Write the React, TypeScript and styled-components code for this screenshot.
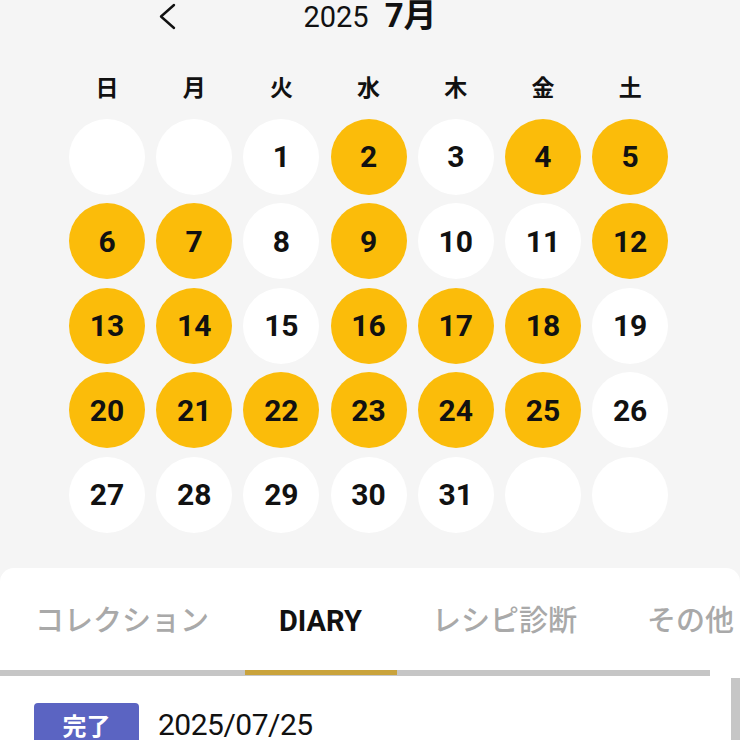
import React from 'react';
import styled, {createGlobalStyle} from "styled-components";

const GlobalStyle = createGlobalStyle`
    html, body {
        margin: 0;
        padding: 0;
        background: #f5f5f5;
    }
    body {
        font-family: Roboto, "Noto Sans CJK JP", sans-serif;
        color: #111;
    }
`

const WEEKDAYS = ['日', '月', '火', '水', '木', '金', '土']
const MARKED = [2, 4, 5, 6, 7, 9, 12, 13, 14, 16, 17, 18, 20, 21, 22, 23, 24, 25]
const TABS = ['コレクション', 'DIARY', 'レシピ診断', 'その他']

const buildCells = (): (number | null)[] => {
    const cells: (number | null)[] = [null, null]
    for (let d = 1; d <= 31; d++) cells.push(d)
    while (cells.length % 7 !== 0) cells.push(null)
    return cells
}

export default function App() {
    const cells = buildCells()
    return (
        <Page>
            <GlobalStyle/>
            <Calendar>
                <Header>
                    <PrevButton aria-label="前の月">
                        <svg width="20" height="28" viewBox="0 0 20 28" fill="none">
                            <polyline points="16,2 3,13.5 16,25" stroke="#111" strokeWidth="2.4"
                                      strokeLinecap="round" strokeLinejoin="round"/>
                        </svg>
                    </PrevButton>
                    <Title>
                        <Year>2025</Year>
                        <Month>7月</Month>
                    </Title>
                    <span/>
                </Header>
                <Grid>
                    {WEEKDAYS.map(w => <Weekday key={w}>{w}</Weekday>)}
                    {cells.map((d, i) => (
                        <Day key={i} $marked={d !== null && MARKED.includes(d)}>{d ?? ''}</Day>
                    ))}
                </Grid>
            </Calendar>
            <Card>
                <TabStrip>
                    {TABS.map(t => <Tab key={t} $active={t === 'DIARY'}>{t}</Tab>)}
                </TabStrip>
                <Track>
                    <Indicator/>
                </Track>
                <Body>
                    <Entry>
                        <Badge>完了</Badge>
                        <DateText>2025/07/25</DateText>
                    </Entry>
                    <ScrollThumb/>
                </Body>
            </Card>
        </Page>
    )
}

const Page = styled.div`
    width: 740px;
    height: 740px;
    overflow: hidden;
    display: flex;
    flex-direction: column;
`

const Calendar = styled.section`
    padding: 0 72px 35px 69px;
`

const Header = styled.div`
    display: grid;
    grid-template-columns: 1fr auto 1fr;
    align-items: center;
    height: 30px;
    margin-top: -11px;
    margin-left: -69px;
    margin-right: -72px;
`

const PrevButton = styled.button`
    justify-self: end;
    margin-right: 125px;
    margin-top: 8px;
    border: none;
    background: none;
    padding: 0;
    display: flex;
`

const Title = styled.div`
    display: flex;
    align-items: baseline;
    gap: 16px;
`

const Year = styled.span`
    font-size: 29px;
    font-weight: 400;
`

const Month = styled.span`
    font-size: 33px;
    font-weight: 700;
`

const Grid = styled.div`
    display: grid;
    grid-template-columns: repeat(7, 76px);
    column-gap: 11.2px;
    row-gap: 8.5px;
    margin-top: 56px;
`

const Weekday = styled.div`
    text-align: center;
    font-size: 23px;
    font-weight: 700;
    line-height: 28px;
    margin-bottom: 7px;
`

const Day = styled.div<{ $marked: boolean }>`
    width: 76px;
    height: 76px;
    border-radius: 50%;
    background: ${p => p.$marked ? '#fbbc0a' : '#ffffff'};
    display: flex;
    align-items: center;
    justify-content: center;
    font-size: 30px;
    font-weight: 700;
    color: #111;
`

const Card = styled.div`
    flex: 1;
    background: #fff;
    border-radius: 14px 14px 0 0;
    display: flex;
    flex-direction: column;
    overflow: hidden;
`

const TabStrip = styled.div`
    display: flex;
    white-space: nowrap;
`

const Tab = styled.div<{ $active: boolean }>`
    padding: 35px 35px 31px;
    font-size: 29px;
    line-height: 36px;
    font-weight: ${p => p.$active ? 700 : 500};
    color: ${p => p.$active ? '#111' : '#a9a9a9'};
    flex-shrink: 0;
`

const Track = styled.div`
    width: 710px;
    height: 8px;
    background: #c6c6c6;
    display: flex;
    align-items: flex-end;
`

const Indicator = styled.div`
    margin-left: 245px;
    width: 152px;
    height: 5px;
    margin-bottom: 1px;
    background: #c9a33c;
`

const Body = styled.div`
    flex: 1;
    display: flex;
`

const Entry = styled.div`
    flex: 1;
    display: flex;
    align-items: center;
    gap: 19px;
    padding: 27px 0 0 34px;
    align-self: flex-start;
`

const Badge = styled.span`
    width: 105px;
    height: 44px;
    border-radius: 4px;
    background: #5b64c2;
    color: #fff;
    font-size: 24px;
    font-weight: 700;
    display: flex;
    align-items: center;
    justify-content: center;
`

const DateText = styled.span`
    font-size: 30px;
    font-weight: 400;
    letter-spacing: -0.5px;
`

const ScrollThumb = styled.div`
    width: 9px;
    margin-top: 2px;
    background: #c6c6c6;
`
